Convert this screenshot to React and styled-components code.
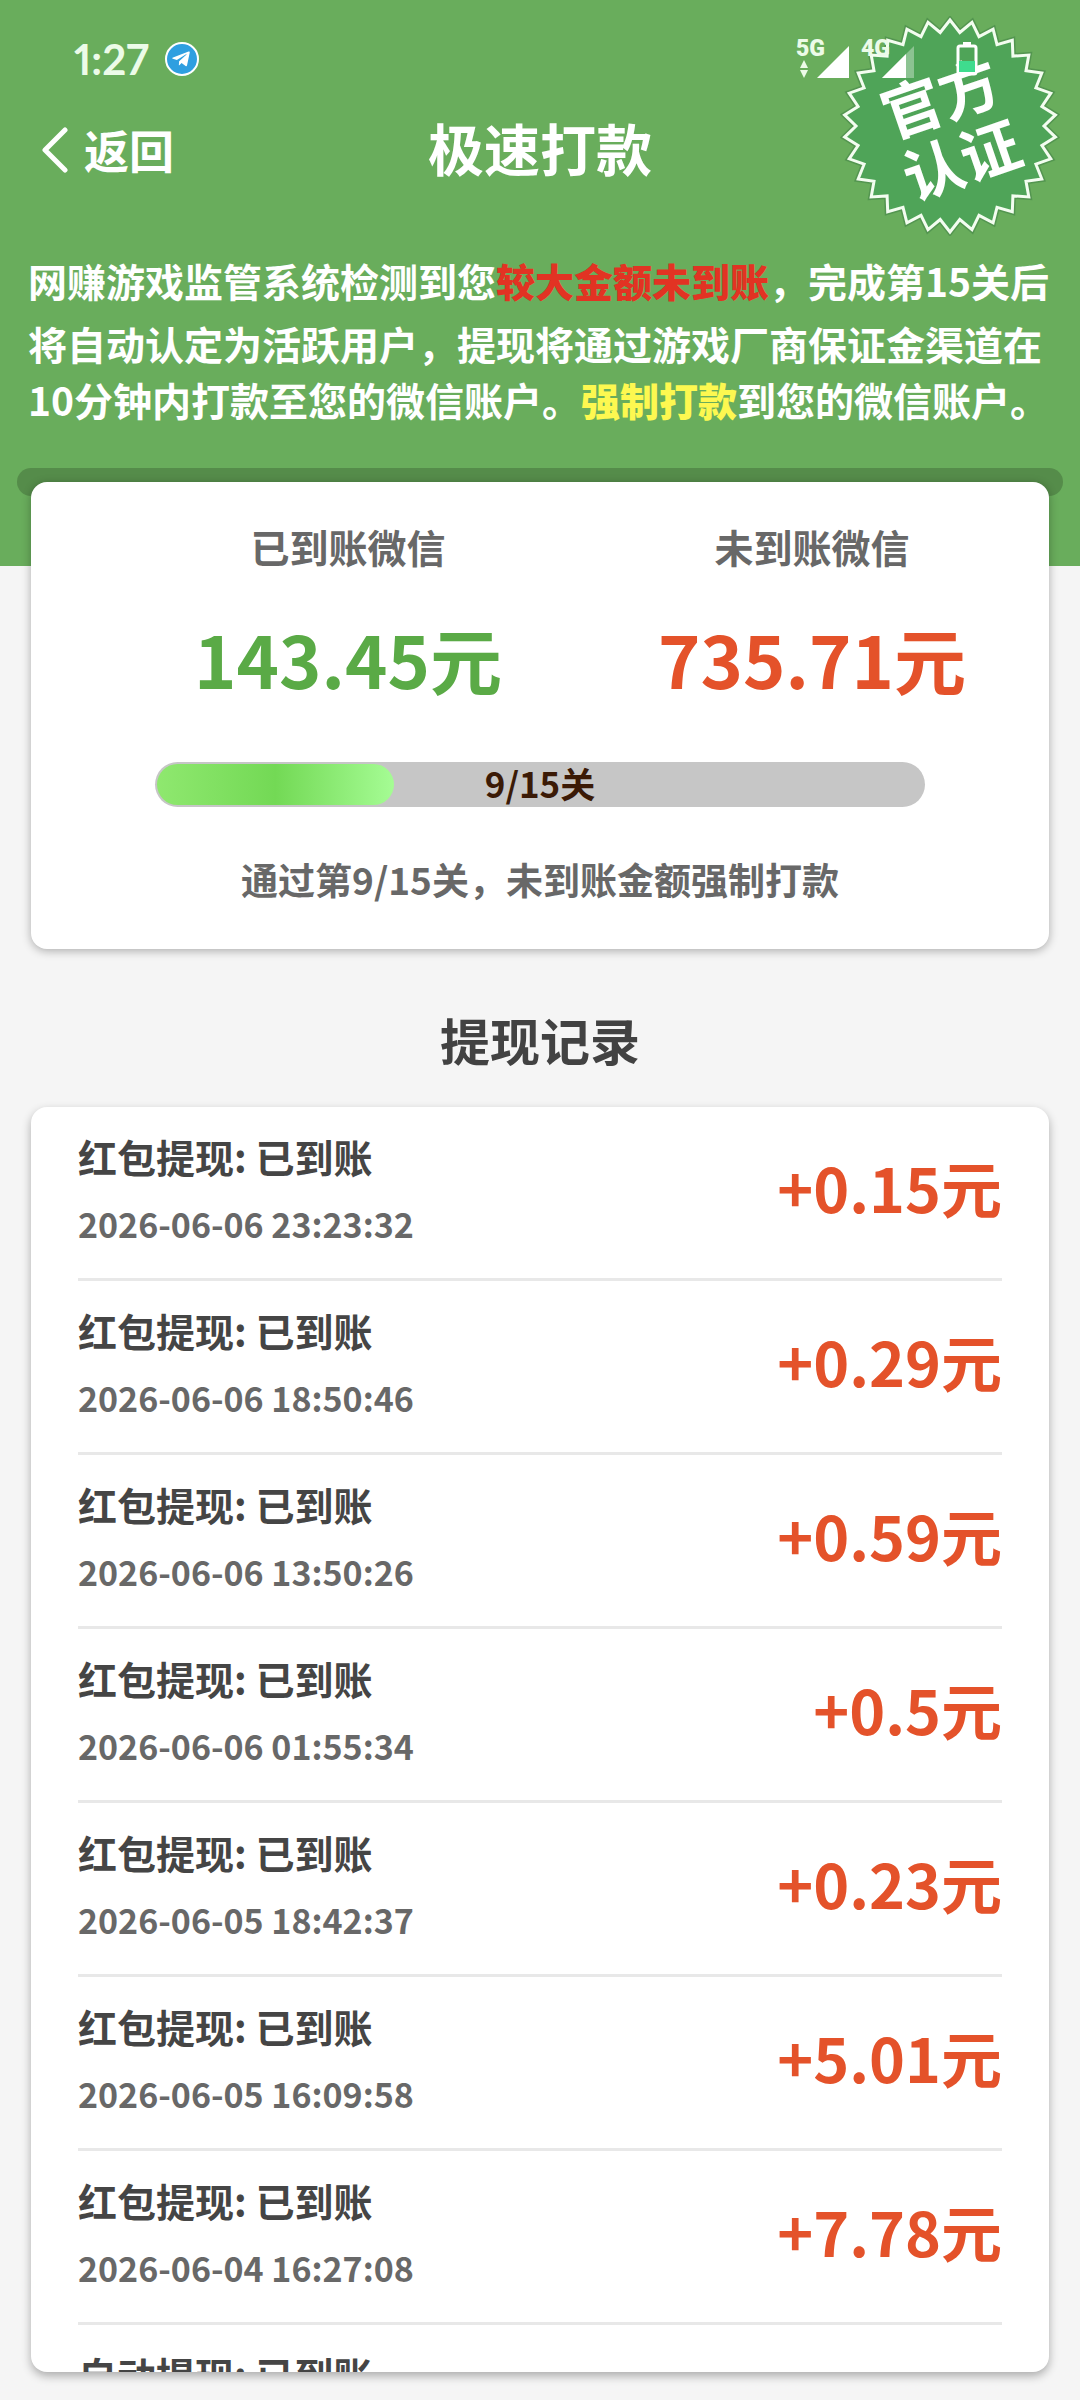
import React from "react";

// style
import styled, { createGlobalStyle } from "styled-components";

// icons
import { FaTelegramPlane } from "react-icons/fa";

// DATA
const records = [
    { id: 1, title: "红包提现: 已到账", time: "2026-06-06 23:23:32", amount: "+0.15元" },
    { id: 2, title: "红包提现: 已到账", time: "2026-06-06 18:50:46", amount: "+0.29元" },
    { id: 3, title: "红包提现: 已到账", time: "2026-06-06 13:50:26", amount: "+0.59元" },
    { id: 4, title: "红包提现: 已到账", time: "2026-06-06 01:55:34", amount: "+0.5元" },
    { id: 5, title: "红包提现: 已到账", time: "2026-06-05 18:42:37", amount: "+0.23元" },
    { id: 6, title: "红包提现: 已到账", time: "2026-06-05 16:09:58", amount: "+5.01元" },
    { id: 7, title: "红包提现: 已到账", time: "2026-06-04 16:27:08", amount: "+7.78元" },
    { id: 8, title: "自动提现: 已到账" },
]

// get the points of the badge edge
const getSpikes = (count, outer, inner) => {
    const points = [];
    for(let i = 0; i < count * 2; i++){
        const radius = i % 2 === 0 ? outer : inner;
        const angle = (Math.PI * i) / count;
        const x = 110 + radius * Math.sin(angle);
        const y = 110 - radius * Math.cos(angle);
        points.push(`${x.toFixed(1)},${y.toFixed(1)}`)
    }
    return points.join(" ");
}

const Signal = ({label, faded, arrows}) => {
    return(
        <SignalBox>
            <Network>
                <span>{label}</span>
                <svg width="8" height="18" viewBox="0 0 8 18" aria-hidden="true">
                    {arrows && <path d="M4 0L8 8H0zM4 18L0 10H8z" fill="#ecfbe8" />}
                </svg>
            </Network>
            <svg width="32" height="32" viewBox="0 0 32 32" aria-hidden="true">
                <path d="M32 0V32H0z" fill="#fff" opacity={faded ? 0.35 : 1} />
                {faded && <path d="M24 8V32H0z" fill="#fff" />}
            </svg>
        </SignalBox>
    )
}

const Battery = () => (
    <svg width="22" height="34" viewBox="0 0 22 34" aria-hidden="true">
        <rect x="7" y="0" width="8" height="4" fill="#fff" />
        <rect x="2" y="4" width="18" height="28" rx="2" fill="none" stroke="#fff" strokeWidth="3" />
        <rect x="3" y="19" width="16" height="11" fill="#3fdc8e" />
    </svg>
)

const App = () => {

    const progress = 31;

    return(
        <>
        <GlobalStyle />
        <Page>
            <Header>
                <Badge>
                    <svg width="220" height="220" viewBox="0 0 220 220" aria-hidden="true">
                        <polygon points={getSpikes(30, 106, 94)} fill="#4fa458" stroke="#3f7f45" strokeWidth="6" opacity="0.5" />
                        <polygon points={getSpikes(30, 106, 94)} fill="#4fa458" stroke="#f3fdf0" strokeWidth="3" />
                    </svg>
                    <BadgeText>官方<br />认证</BadgeText>
                </Badge>
                <StatusBar>
                    <Clock>1:27</Clock>
                    <Telegram><FaTelegramPlane /></Telegram>
                    <Signals>
                        <Signal label="5G" arrows />
                        <Signal label="4G" faded />
                    </Signals>
                    <Battery />
                </StatusBar>
                <Nav>
                    <Back type="button">
                        <svg width="26" height="46" viewBox="0 0 26 46" aria-hidden="true">
                            <path d="M23 3L3 23L23 43" fill="none" stroke="#fff" strokeWidth="5" strokeLinecap="round" strokeLinejoin="round" />
                        </svg>
                        返回
                    </Back>
                    <h1>极速打款</h1>
                </Nav>
                <Notice>
                    <span>网赚游戏监管系统检测到您<Mark $color="#e23323">较大金额未到账</Mark>，完成第15关后</span>
                    <span>将自动认定为活跃用户，提现将通过游戏厂商保证金渠道在</span>
                    <span>10分钟内打款至您的微信账户。<Mark $color="#fdf850">强制打款</Mark>到您的微信账户。</span>
                </Notice>
            </Header>
            <Main>
                <Slot />
                <Summary>
                    <Totals>
                        <Total $color="#5aaa46">
                            <h2>已到账微信</h2>
                            <p>143.45元</p>
                        </Total>
                        <Total $color="#e4522a">
                            <h2>未到账微信</h2>
                            <p>735.71元</p>
                        </Total>
                    </Totals>
                    <Track role="progressbar" aria-label="9/15关" aria-valuemin="0" aria-valuemax="100" aria-valuenow={progress}>
                        <Fill style={{ width: `${progress}%` }} />
                        <span>9/15关</span>
                    </Track>
                    <Hint>通过第9/15关，未到账金额强制打款</Hint>
                </Summary>
                <SectionTitle>提现记录</SectionTitle>
                <Records>
                    {records.map((item) => (
                        <Record key={item.id}>
                            <Info>
                                <h3>{item.title}</h3>
                                {item.time && <time>{item.time}</time>}
                            </Info>
                            {item.amount && <Amount>{item.amount}</Amount>}
                        </Record>
                    ))}
                </Records>
            </Main>
        </Page>
        </>
    )
}

const GlobalStyle = createGlobalStyle`
    * {
        margin: 0;
        padding: 0;
        box-sizing: border-box;
    }

    body {
        background: #f5f5f5;
        font-family: "Noto Sans CJK SC", sans-serif;
        font-weight: 700;
    }

    svg {
        display: block;
    }
`

const Page = styled.div`
    height: 100vh;
    display: flex;
    flex-direction: column;
    overflow: hidden;
`

const Header = styled.header`
    position: relative;
    background: #69ad5c;
    color: white;
    padding-bottom: 139px;
`

const Badge = styled.div`
    position: absolute;
    top: 16px;
    right: 20px;
`

const BadgeText = styled.p`
    position: absolute;
    inset: 0;
    display: flex;
    align-items: center;
    justify-content: center;
    transform: rotate(-19deg);
    font-size: 60px;
    line-height: 66px;
`

const StatusBar = styled.div`
    position: relative;
    display: flex;
    align-items: center;
    height: 118px;
    padding: 0 102px 0 74px;
`

const Clock = styled.span`
    font-family: Lato, sans-serif;
    font-size: 42px;
    font-variant-numeric: proportional-nums;
    color: #ecfbe8;
`

const Telegram = styled.span`
    display: flex;
    align-items: center;
    justify-content: center;
    width: 34px;
    height: 34px;
    margin-left: 16px;
    padding-right: 2px;
    border: 2px solid white;
    border-radius: 50%;
    background: #2f9fe0;
    font-size: 20px;
`

const Signals = styled.div`
    display: flex;
    gap: 12px;
    margin: 0 42px 0 auto;
`

const SignalBox = styled.div`
    display: flex;
    align-items: flex-end;
`

const Network = styled.div`
    display: flex;
    flex-direction: column;
    gap: 2px;
    margin-right: -8px;
    font-family: Roboto, sans-serif;
    font-size: 23px;
    font-weight: 900;
    line-height: 18px;
    color: #ecfbe8;

    svg {
        margin-left: 4px;
    }
`

const Nav = styled.nav`
    position: relative;
    display: flex;
    align-items: center;
    justify-content: center;
    height: 64px;

    h1 {
        font-size: 56px;
        line-height: 64px;
        padding-bottom: 6px;
    }
`

const Back = styled.button`
    position: absolute;
    left: 42px;
    display: flex;
    align-items: center;
    gap: 16px;
    border: none;
    background: none;
    color: white;
    font: inherit;
    font-size: 45px;
    line-height: 64px;
`

const Notice = styled.p`
    padding: 70px 28px 0;
    font-size: 39px;
    line-height: 56px;
    white-space: nowrap;

    span {
        display: block;
    }

    span:first-child {
        margin-bottom: 7px;
    }
`

const Mark = styled.b`
    color: ${(props) => props.$color};
`

const Main = styled.main`
    position: relative;
    display: flex;
    flex-direction: column;
    flex: 1;
    min-height: 0;
    margin-top: -98px;
    padding: 0 31px 28px;
`

const Slot = styled.div`
    flex: none;
    height: 28px;
    margin: 0 -14px -14px;
    border-radius: 14px;
    background: #558c4a;
`

const Summary = styled.section`
    border-radius: 16px;
    background: white;
    box-shadow: 0 2px 10px rgba(0, 0, 0, 0.3);
    padding: 36px 0 42px;
`

const Totals = styled.div`
    display: flex;
    padding: 0 5px 0 85px;
`

const Total = styled.div`
    flex: 1;
    text-align: center;

    h2 {
        color: #686868;
        font-size: 39px;
        line-height: 56px;
    }

    p {
        margin-top: 36px;
        color: ${(props) => props.$color};
        font-size: 72px;
        line-height: 96px;
    }
`

const Track = styled.div`
    position: relative;
    height: 45px;
    margin: 56px 124px 0;
    padding: 2px;
    border-radius: 23px;
    background: #c6c6c6;

    span {
        position: absolute;
        inset: 0;
        text-align: center;
        color: #3b1a06;
        font-size: 35px;
        line-height: 42px;
    }
`

const Fill = styled.div`
    height: 100%;
    border-radius: 21px;
    background: linear-gradient(90deg, #8fe86f, #73d955 50%, #a5fc94);
`

const Hint = styled.p`
    margin-top: 44px;
    text-align: center;
    color: #686868;
    font-size: 37px;
    line-height: 56px;
`

const SectionTitle = styled.h2`
    padding: 58px 0 36px;
    text-align: center;
    color: #424242;
    font-size: 50px;
    line-height: 64px;
`

const Records = styled.ul`
    flex: 1;
    min-height: 0;
    overflow: hidden;
    border-radius: 16px;
    background: white;
    box-shadow: 0 4px 10px rgba(0, 0, 0, 0.3);
    padding: 0 47px;
    list-style: none;
`

const Record = styled.li`
    display: flex;
    justify-content: space-between;
    height: 174px;
    border-bottom: 3px solid #e8e8e8;
`

const Info = styled.div`
    display: flex;
    flex-direction: column;
    gap: 18px;
    padding-top: 24px;

    h3 {
        color: #454545;
        font-size: 39px;
        line-height: 50px;
    }

    time {
        color: #686868;
        font-size: 34px;
        line-height: 50px;
    }
`

const Amount = styled.p`
    align-self: center;
    padding-bottom: 12px;
    color: #e4522a;
    font-size: 61px;
    line-height: 80px;
`

export default App
